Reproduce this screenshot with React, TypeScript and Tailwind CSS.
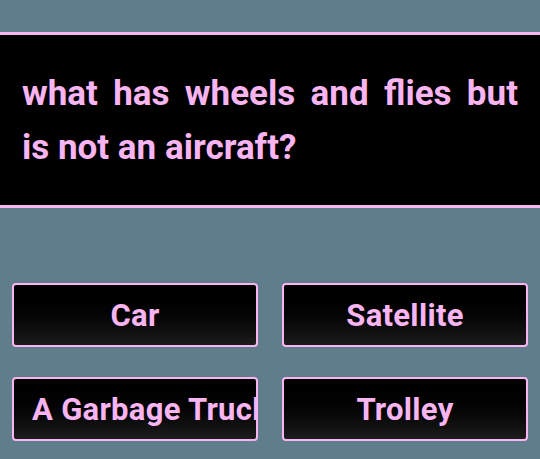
import React from "react";

const answers = ["Car", "Satellite", "A Garbage Truck", "Trolley"];

export default function App() {
  return (
    <div
      className="w-[540px] h-[459px] bg-[#607d8b] pt-[32px] overflow-hidden"
      style={{ fontFamily: "Roboto, 'Noto Sans', sans-serif" }}
    >
      <div className="bg-black border-y-[3px] border-[#f9b5f1] px-[22px] pt-[32px] pb-[30px]">
        <p className="text-[#f9b5f1] font-bold text-[35px] leading-[54px] text-justify">
          what has wheels and flies but is not an aircraft?
        </p>
      </div>
      <div className="grid grid-cols-2 gap-x-[24px] gap-y-[30px] px-[12px] mt-[75px]">
        {answers.map((a) => (
          <div
            key={a}
            className="h-[64px] rounded-[4px] border-2 border-[#f9b5f1] bg-gradient-to-b from-black to-[#1c1c1c] overflow-hidden flex items-center px-[18px]"
          >
            <div className="w-full text-center whitespace-nowrap text-[#f9b5f1] font-bold text-[31px] tracking-[0.3px] leading-none">
              {a}
            </div>
          </div>
        ))}
      </div>
    </div>
  );
}
